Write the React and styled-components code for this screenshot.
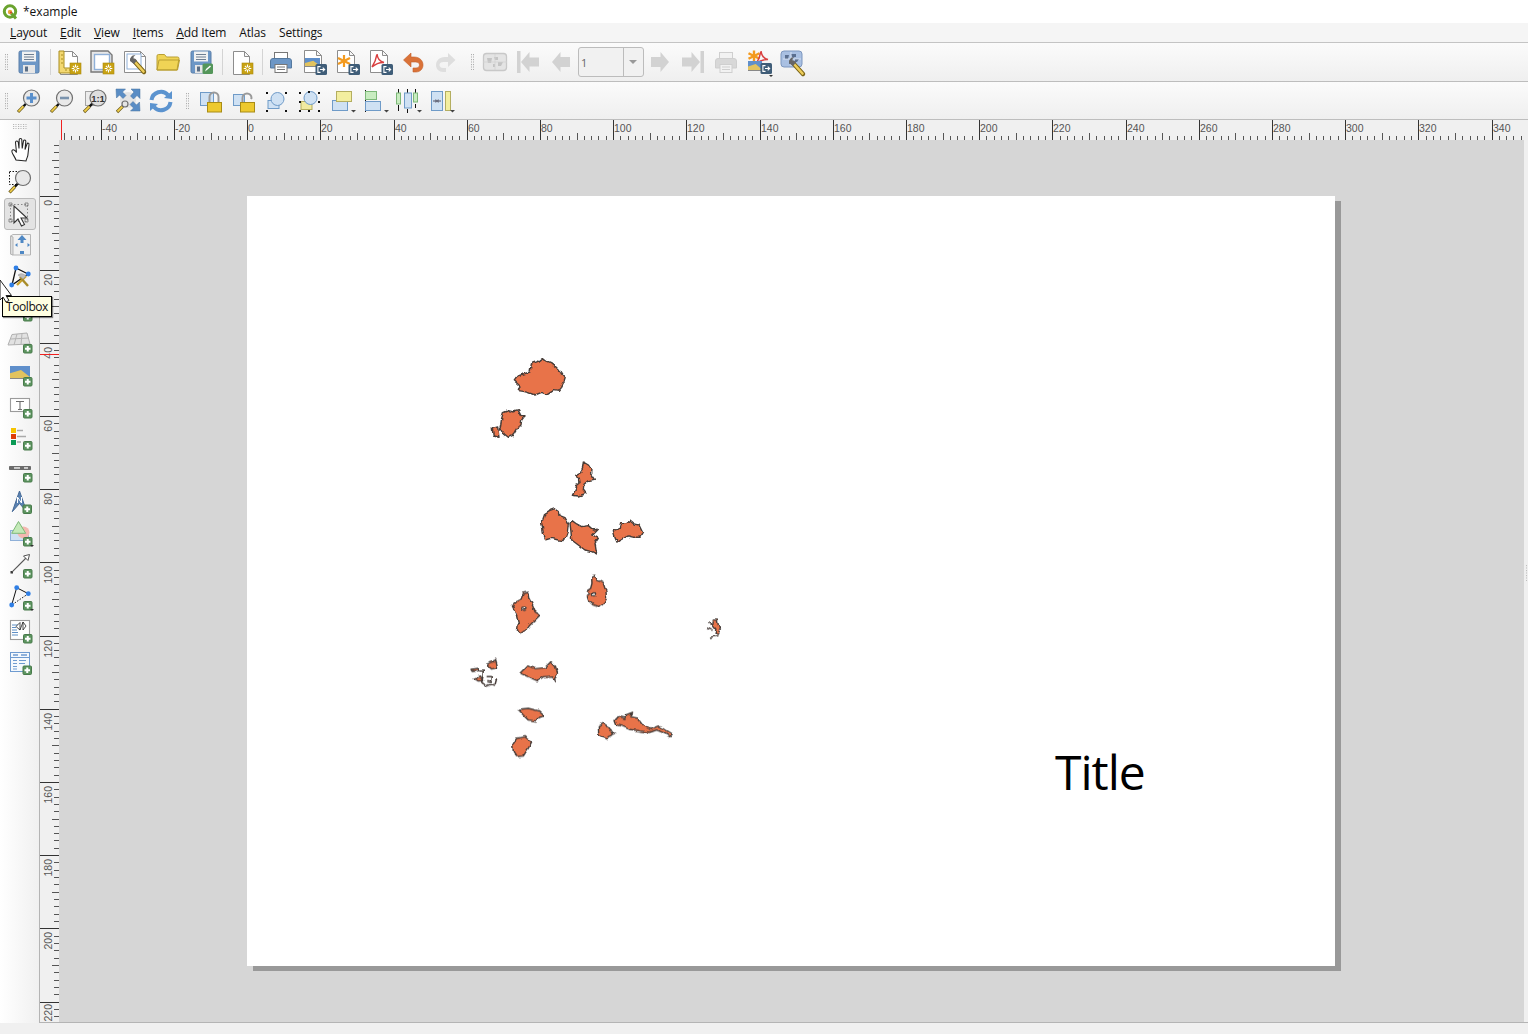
import React from 'react';
import styled, { createGlobalStyle } from 'styled-components';

const Global = createGlobalStyle`
  html, body { margin: 0; padding: 0; background: #f0f0f0; overflow: hidden; }
  body { font-family: "Open Sans", "Noto Sans", sans-serif; font-size: 12px; color: #111; }
`;

const Window = styled.div`
  position: relative; width: 1528px; height: 1034px; display: flex; flex-direction: column; overflow: hidden;
`;
const TitleBar = styled.div`
  height: 23px; flex: none; background: #fff; display: flex; align-items: center; padding-left: 2px; gap: 5px;
  font-size: 12px; color: #111;
`;
const MenuBar = styled.div`
  height: 19px; flex: none; display: flex; align-items: center; gap: 13px; padding-left: 10px;
  background: #f5f5f5; border-bottom: 1px solid #c4c4c4;
`;
const MenuItem = styled.span`
  font-size: 12px; color: #111; letter-spacing: -0.12px; u { text-underline-offset: 1px; }
`;
const ToolBar = styled.div`
  height: ${p => p.$h}px; flex: none; display: flex; align-items: center;
  background: linear-gradient(#fbfbfb, #efefef); border-bottom: 1px solid #bdbdbd;
`;
const ToolGroup = styled.div`
  display: flex; align-items: center; height: 100%; padding-right: 3.5px;
`;
const Handle = styled.div`
  width: 12.5px; height: 16px; flex: none; position: relative;
  &::before {
    content: ""; position: absolute; left: 5px; top: 0; width: 4px; height: 16px;
    background-image: radial-gradient(circle at 0.5px 0.5px, #a8a8a8 0.6px, transparent 0.8px);
    background-size: 2px 2.5px;
  }
`;
const HHandle = styled.div`
  height: 6px; width: 15px; margin: 0 auto; flex: none;
  background-image: radial-gradient(circle at 0.5px 0.5px, #b0b0b0 0.6px, transparent 0.8px);
  background-size: 2.5px 2px;
`;
const Sep = styled.div`
  width: 7px; height: 26px; flex: none; position: relative;
  &::before { content: ""; position: absolute; left: 4px; top: 0; bottom: 0; width: 1px; background: #d4d4d4; }
`;
const ToolButton = styled.div`
  width: 33px; height: 33px; flex: none; display: flex; align-items: center; justify-content: center;
`;
const IconSvg = styled.svg`
  width: 32px; height: 32px; display: block; flex: none;
`;
const LogoSvg = styled.svg`
  width: 16px; height: 16px; display: block; flex: none;
`;
const Combo = styled.div`
  width: 65.5px; height: 30px; flex: none; box-sizing: border-box; margin-left: 0.5px; display: flex;
  border: 1px solid #bcbcbc; border-radius: 3px; background: #f1f1f1; color: #666; font-size: 11px;
`;
const ComboValue = styled.div`
  width: 45px; box-sizing: border-box; padding-left: 2px; display: flex; align-items: center; border-right: 1px solid #bcbcbc;
`;
const ComboArrow = styled.div`
  flex: 1; display: flex; align-items: center; justify-content: center;
  &::before { content: ""; border: 4px solid transparent; border-top: 4px solid #999; border-bottom: 0; }
`;
const Work = styled.div`
  flex: 1; min-height: 0; display: flex;
`;
const SideBar = styled.div`
  width: 40px; flex: none; display: flex; flex-direction: column; align-items: center; padding: 4px 0 0 1px; box-sizing: border-box;
  background: linear-gradient(90deg, #ffffff, #f0f0f0); border-right: 1px solid #b4b4b4;
`;
const SideButton = styled.div`
  width: 32px; height: 32.125px; flex: none; display: flex; align-items: center; justify-content: center; box-sizing: border-box;
  ${p => p.$active && `
    background: #e3e3e3; border: 1px solid #b9b9b9; border-radius: 3px; margin-top: 1px; margin-bottom: -1px;
  `}
`;
const SideHandle = styled.div`
  height: 6px; flex: none; margin-bottom: 2.6px; display: flex; align-items: center;
`;
const Main = styled.div`
  flex: 1; min-width: 0; display: flex; flex-direction: column;
`;
const Ruler = styled.svg`
  display: block; flex: none; background: #f0f0f0;
  text { font-family: "Liberation Sans", sans-serif; font-size: 10.5px; fill: #555; }
`;
const ViewRow = styled.div`
  flex: 1; min-height: 0; display: flex; border-bottom: 1px solid #b4b4b4;
`;
const Canvas = styled.div`
  flex: 1; min-width: 0; background: #d6d6d6; padding: 56px 0 0 188px; box-sizing: border-box; overflow: hidden;
`;
const Page = styled.div`
  position: relative; width: 1088px; height: 770px; background: #fff; box-shadow: 6px 5px 0 #999;
`;
const MapSvg = styled.svg`
  position: absolute; inset: 0; width: 100%; height: 100%;
`;
const PageTitle = styled.div`
  position: absolute; left: 808px; top: 543px; font-family: "Open Sans", sans-serif; font-size: 48px; line-height: 66px; letter-spacing: -1px; color: #000;
`;
const RightStrip = styled.div`
  width: 4px; flex: none; background: #f0f0f0; position: relative;
  &::after {
    content: ""; position: absolute; left: 2px; top: 425px; width: 1px; height: 16px;
    background-image: radial-gradient(circle at 0.5px 0.5px, #bbb 0.6px, transparent 0.8px); background-size: 1px 2.5px;
  }
`;
const StatusBar = styled.div`
  height: 11px; flex: none; background: #f0f0f0;
`;
const Tooltip = styled.div`
  position: absolute; left: 2px; top: 296px; width: 50px; height: 21px; box-sizing: border-box;
  background: #ffffe1; border: 1px solid #000; box-shadow: 1px 1px 1px rgba(0,0,0,.45);
  font-size: 12px; line-height: 19px; text-align: center; color: #111; letter-spacing: -0.45px;
`;
const CursorSvg = styled.svg`
  position: absolute; left: 0; top: 280px; width: 14px; height: 22px;
`;
const IconText = styled.text`
  font-family: "Liberation Sans", sans-serif; font-weight: 700; font-size: 9.5px; fill: #333;
`;

/* ---------- icon atoms ---------- */
const Sun = ({ x = 17, y = 17 }) => (
  <g transform={`translate(${x} ${y})`}>
    <rect width="11" height="11" fill="#c8a212" stroke="#ab8a10" strokeWidth=".6" />
    <path d="M5.5 1.5v8M1.7 5.5h7.6M2.9 2.9l5.2 5.2M8.1 2.9l-5.2 5.2" stroke="#fff" strokeWidth="1.1" />
    <circle cx="5.5" cy="5.5" r="1.3" fill="#c8a212" />
  </g>
);
const Exp = ({ x = 17, y = 17 }) => (
  <g transform={`translate(${x} ${y})`}>
    <rect width="11.5" height="11" rx="1.5" fill="#3f5d78" />
    <path d="M5 2.6H2.4v5.8H5M4.5 5.5h4.5M7.2 3.6l2 1.9-2 1.9" fill="none" stroke="#fff" strokeWidth="1.1" />
  </g>
);
const Plus = ({ x = 19, y = 19, d }) => (
  <g transform={`translate(${x} ${y})`}>
    <rect x=".5" y=".5" width="8.5" height="8.5" rx="1" fill="#5d9560" stroke="#487a4b" />
    <path d="M4.75 2v5.5M2 4.75h5.5" stroke="#fff" strokeWidth="2" />
    {d && <path d="M7 8h4l-2 2z" fill="#333" />}
  </g>
);
const Drop = () => <path d="M25 25h5l-2.5 2.6z" fill="#444" />;
const Doc = ({ x = 7, y = 5, w = 17, h = 23 }) => (
  <path d={`M${x + .5} ${y + .5}h${w - 5}l5 5v${h - 5}h-${w}z M${x + w - 4.5} ${y + .5}v5h5`} fill="#fff" stroke="#8d8d8d" strokeWidth="1" />
);
const Mag = ({ cx = 18.5, cy = 13, r = 8, tx = 5, ty = 27, fill = '#e9e9e9' }) => {
  const dx = cx - tx, dy = cy - ty, L = Math.hypot(dx, dy);
  const ex = cx - (dx / L) * r, ey = cy - (dy / L) * r;
  const mx = tx + (dx / L) * 8, my = ty + (dy / L) * 8;
  return (
    <g>
      <line x1={tx} y1={ty} x2={mx} y2={my} stroke="#6b5a1a" strokeWidth="3.2" />
      <line x1={tx + .5} y1={ty - .5} x2={mx} y2={my} stroke="#f2cf4a" strokeWidth="1.8" />
      <line x1={mx} y1={my} x2={ex} y2={ey} stroke="#111" strokeWidth="2.4" />
      <circle cx={cx} cy={cy} r={r} fill={fill} stroke="#6f6f6f" strokeWidth="1.2" />
    </g>
  );
};
const Wrench = ({ x = 0, y = 0 }) => (
  <g transform={`translate(${x} ${y})`}>
    <path d="M14 13l10 11" stroke="#7a6416" strokeWidth="4.4" strokeLinecap="round" />
    <path d="M14.5 13.5l9 10" stroke="#eecd5a" strokeWidth="2.6" strokeLinecap="round" />
    <path d="M15.5 7.5a4.6 4.6 0 0 0-5.5 5.5l4 3 3-3.5-1.8-1.7-1.7-.2.2-2z" fill="#666" />
  </g>
);
const Floppy = ({ c = '#6d97c6' }) => (
  <g>
    <path d="M6 6.5q0-1.5 1.5-1.5h17q1.5 0 1.5 1.5v19q0 1.5-1.5 1.5h-17q-1.500 0-1.500-1.500z" fill={c} stroke="#5a7ea8" />
    <rect x="9" y="5.500" width="14" height="10" fill="#f2f2f2" />
    <path d="M11 8.500h10M11 11h10M11 13.500h10" stroke="#6f7f92" />
    <rect x="10" y="19" width="12" height="8" fill="#e6e6e6" />
    <rect x="12" y="20.500" width="3" height="5" fill="#5a6e86" />
  </g>
);
const Printer = ({ c = '#6d97c6', s = '#55799f', p = '#fff', l = '#777' }) => (
  <g>
    <rect x="9.500" y="6.500" width="13" height="7" fill={p} stroke={l} />
    <path d="M5.500 15q0-2.500 2.500-2.500h16q2.500 0 2.500 2.500v7h-21z" fill={c} stroke={s} />
    <rect x="10" y="18.500" width="12" height="8" fill={p} stroke={l} />
    <path d="M12 21h8M12 23.500h8" stroke={l} />
  </g>
);
const Landscape = ({ x, y, w, h }) => (
  <g>
    <rect x={x} y={y} width={w} height={h} fill="#5f8fcb" />
    <path d={`M${x} ${y + h * 0.55}L${x + w * 0.55} ${y + h * 0.3}L${x + w} ${y + h * 0.85}V${y + h}H${x}z`} fill="#e2c35f" />
    <rect x={x} y={y + h - 1} width={w} height="1" fill="#888" />
  </g>
);
const Aster = ({ x, y, r = 6, c = '#f39a1f', w = 2.2 }) => (
  <g stroke={c} strokeWidth={w}>
    <line x1={x} y1={y - r} x2={x} y2={y + r} />
    <line x1={x - r} y1={y - r * .5} x2={x + r} y2={y + r * .5} />
    <line x1={x - r} y1={y + r * .5} x2={x + r} y2={y - r * .5} />
  </g>
);
const Pdf = ({ x = 0, y = 0, c = '#d94040' }) => (
  <path transform={`translate(${x} ${y})`} d="M9 22c2-3 4-7 5-13 .5 5 2.500 7.500 7 8.500-4-.2-8 1-12 4.500z" fill="none" stroke={c} strokeWidth="1.500" />
);
const Padlock = ({ open }) => (
  <g>
    <path d={open ? 'M15.500 17v-4a4.500 4.500 0 0 1 9 0l-.5 1' : 'M15.500 18v-6a4.500 4.500 0 0 1 9 0v6'} fill="none" stroke="#9a9a9a" strokeWidth="2" />
    <rect x="13.500" y="17.500" width="14" height="9.500" fill="#edc92f" stroke="#a88c16" />
  </g>
);
const Node = ({ x, y }) => <circle cx={x} cy={y} r="2.400" fill="#2f7fe6" />;

/* ---------- icons ---------- */
const icons = {
  save: <Floppy />,
  newLayout: <g><Doc /><path d="M6 5h5v17h12v5H6z" fill="#f3d872" stroke="#a98d20" /><path d="M8 9h2M8 13h2M8 17h2M13 25v-2M17 25v-2" stroke="#a98d20" /><Sun /></g>,
  dupLayout: <g><path d="M5 5h17l4 4v17H5z" fill="#e7e7e7" stroke="#777" strokeWidth="1.400" /><rect x="8.500" y="8.500" width="15" height="15" fill="#fff" stroke="#8fb0d8" strokeWidth="1.400" /><Sun /></g>,
  layoutProps: <g><Doc x={5} y={5} w={21} h={21} /><rect x="8" y="8" width="14" height="15" fill="#fff" stroke="#8fb0d8" /><Wrench x={1} y={2} /></g>,
  folder: <path d="M5 24V10q0-1.500 1.500-1.500h6l2 2.500h11q1.500 0 1.500 1.500l-2 11.500z M7 14h20.500L25.500 24H5z" fill="#f0d455" stroke="#b99f33" strokeWidth="1" />,
  saveAs: <g><Floppy /><rect x="17.500" y="17.500" width="10.500" height="10.500" rx="1.500" fill="#54965a" /><path d="M20 25.500l1-2.500 4-3.500 1 1-4 3.500z" fill="#fff" /></g>,
  newPage: <g><Doc x={8} y={5} w={16} h={23} /><Sun /></g>,
  print: <Printer />,
  expImg: <g><Doc x={6} y={4} w={17} h={22} /><Landscape x={7} y={12} w={15} h={9} /><Exp x={17.500} y={18} /></g>,
  expSvg: <g><Doc x={6} y={4} w={17} h={22} /><Aster x={13} y={15} /><Exp x={17.500} y={18} /></g>,
  expPdf: <g><Doc x={6} y={4} w={17} h={22} /><Pdf x={-1} y={-1} /><Exp x={17.500} y={18} /></g>,
  undo: <path d="M6.500 14l7.500-7v4h3c6 0 9 4 9 8 0 4-3 7-7 7h-3v-4h3c2 0 3.500-1.300 3.500-3 0-1.800-1.500-3-4-3H14v5z" fill="#da7238" stroke="#c25f2a" strokeWidth=".6" />,
  redo: <path d="M25.500 14L18 7v4h-3c-6 0-9 4-9 8 0 4 3 7 7 7h3v-4h-3c-2 0-3.500-1.300-3.500-3 0-1.800 1.500-3 4-3H18v5z" fill="#dedede" />,
  atlasPreview: <g><rect x="4.500" y="7.500" width="23" height="17" rx="3" fill="#e4e4e4" stroke="#c8c8c8" strokeWidth="1.300" /><path d="M8 12h5l-1 5h-3zM15 11h4v3h-3zM19 16h5l-2 4h-3zM14 18h2v3h-2z" fill="#c4c4c4" /><path d="M4 16h24M16 8v16" stroke="#d2d2d2" strokeWidth=".8" /></g>,
  first: <g fill="#d2d2d2"><rect x="5" y="5" width="3.500" height="22" /><path d="M9 16l8.500-10v5.500H27v9h-9.500V26z" /></g>,
  prev: <path d="M7 16l8.500-10v5h9.500v10h-9.500v5z" fill="#d2d2d2" />,
  next: <path d="M25 16l-8.500-10v5H7v10h9.500v5z" fill="#d2d2d2" />,
  last: <g fill="#d2d2d2"><rect x="23.500" y="5" width="3.500" height="22" /><path d="M23 16L14.500 6v5.500H5v9h9.500V26z" /></g>,
  printAtlas: <Printer c="#d8d8d8" s="#cfcfcf" p="#f2f2f2" l="#cfcfcf" />,
  expAtlas: <g><Aster x={11} y={10} r={5.500} w={2.400} /><Pdf x={4} y={-4} /><Landscape x={5} y={15} w={14} h={10} /><Exp x={17.500} y={17} /><path d="M26 29h4l-2 2z" fill="#333" /></g>,
  atlasSettings: <g><rect x="5" y="5" width="21" height="16" rx="3" fill="#a9c0e2" stroke="#7d97bf" /><path d="M9 9h4l-1 4H9zM15 8h5v3h-4zM19 13h4l-2 3h-2zM13 15h2v3h-2z" fill="#5a6f90" /><path d="M7 13h18M15 6v14" stroke="#e8eef8" strokeWidth=".7" /><Wrench x={3} y={4} /></g>,

  zoomIn: <g><Mag /><path d="M18.500 8v10M13.500 13h10" stroke="#5a90cc" strokeWidth="3" /></g>,
  zoomOut: <g><Mag /><path d="M14 13h9" stroke="#7a93ad" strokeWidth="2.600" /></g>,
  zoom100: <g><rect x="6.500" y="6.500" width="14" height="14" fill="#ececec" stroke="#a5a5a5" /><Mag cx={19} cy={13} r={8} fill="#dedede" /><IconText x="19" y="16.500" textAnchor="middle">1:1</IconText></g>,
  zoomFull: <g><circle cx="16" cy="15" r="8" fill="#e4e4e4" /><g fill="#5a8dc5" stroke="#44719f" strokeWidth=".5"><path d="M4 4h9.500l-3 3 3.500 3.500-3 3L7.500 10l-3 3zM28 4v9.500l-3-3-3.500 3.500-3-3L22 7l-3-3zM28 26h-9.500l3-3-3.500-3.500 3-3 3.500 3.500 3-3z" /></g><Mag cx={13} cy={19} r={3} tx={5} ty={27} fill="#e4e4e4" /></g>,
  refresh: <g fill="none" stroke="#5b93cf" strokeWidth="4"><path d="M6.500 15a9.500 9.500 0 0 1 16.500-5" /><path d="M25.500 17a9.500 9.500 0 0 1-16.500 5" /><path d="M19 13l8 1V6z" fill="#5b93cf" stroke="none" /><path d="M13 19l-8-1v8z" fill="#5b93cf" stroke="none" /></g>,

  lock: <g><rect x="6.500" y="7.500" width="13" height="13" fill="#cfe1f3" stroke="#6f9bc8" /><Padlock /></g>,
  unlock: <g><rect x="6.500" y="9.500" width="11" height="11" fill="#cfe1f3" stroke="#6f9bc8" /><Padlock open /></g>,
  group: <g><rect x="8" y="15.500" width="11" height="8" fill="#cfe1f3" stroke="#6f9bc8" /><circle cx="17.500" cy="14" r="6.500" fill="#cfe1f3" stroke="#6f9bc8" /><path d="M6 7h2v2H6zM25 7h2v2h-2zM6 25h2v2H6zM25 25h2v2h-2z" fill="#111" /></g>,
  ungroup: <g><rect x="8" y="16.500" width="11" height="8" fill="#f0eaa0" stroke="#b4ae60" /><circle cx="17.500" cy="13" r="6.500" fill="#cfe1f3" stroke="#6f9bc8" /><path d="M6 7h2v2H6zM15 6h2v2h-2zM25 7h2v2h-2zM6 16h2v2H6zM25 16h2v2h-2zM6 25h2v2H6zM15 25h2v2h-2zM25 25h2v2h-2z" fill="#111" /></g>,
  raise: <g><rect x="6.500" y="15.500" width="15" height="10" fill="#cfe1f3" stroke="#6f9bc8" /><rect x="10.500" y="6.500" width="15" height="10" fill="#f3ee9f" stroke="#b4ae60" /><Drop /></g>,
  align: <g><path d="M6.500 5v22" stroke="#111" /><rect x="6.500" y="6.500" width="11" height="8" fill="#c8ecc0" stroke="#7cb878" /><rect x="6.500" y="16.500" width="15" height="9" fill="#cfe1f3" stroke="#6f9bc8" /><Drop /></g>,
  distribute: <g><path d="M6.500 4v4M6.500 20v6M15.500 4v4M15.500 24v4M23.500 4v4M23.500 19v4" stroke="#111" /><rect x="4.500" y="8" width="4" height="11" fill="#c8ecc0" stroke="#7cb878" /><rect x="12.500" y="8" width="7" height="15" fill="#cfe1f3" stroke="#6f9bc8" /><rect x="21.500" y="8" width="4" height="9" fill="#c8ecc0" stroke="#7cb878" /><Drop /></g>,
  resize: <g><rect x="6.500" y="6.500" width="11" height="19" fill="#cfe1f3" stroke="#6f9bc8" /><rect x="20.500" y="6.500" width="5" height="19" fill="#f3ee9f" stroke="#b4ae60" /><path d="M8 16h3M16 16h-3" stroke="#556" /><path d="M10.500 14v4l2-2zM13.500 14v4l-2-2z" fill="#556" /><Drop /></g>,

  hand: <path d="M12 27C10.500 23 7 19.500 8 17.500 9 16 11 17 12.500 19.500L11.500 9.500C11.500 7.500 14 7.500 14.300 9.500L15 15.500 15.200 6.800C15.200 5 17.800 5 17.800 6.800L18.200 15.500 19.500 8C20 6.300 22 6.700 21.800 8.500L21 16.500 23 11C23.600 9.500 25.500 10 25 11.800L24 21C24 24 22.500 25 22 28z" fill="#fff" stroke="#222" strokeWidth="1.050" />,
  zoomArea: <g><rect x="5.500" y="6.500" width="15" height="13" fill="none" stroke="#111" strokeDasharray="1.500 1.500" /><Mag cx={19} cy={13} r={7.500} tx={5.500} ty={27.500} fill="#e8e8e8" /></g>,
  select: <g><rect x="6.500" y="6.500" width="17" height="17" fill="none" stroke="#888" strokeDasharray="1.500 2" /><path d="M5 5h3v3H5zM21 5h3v3h-3zM5 21h3v3H5zM21 21h3v3h-3z" fill="none" stroke="#777" strokeWidth=".8" /><path d="M10 8v17l4-4 3.500 7 3-1.500-3.500-6.500h6z" fill="#fff" stroke="#333" strokeWidth="1.100" /></g>,
  moveContent: <g><path d="M9 5.500h17.500V26H9l-2.500-1V7z" fill="#f2f2f2" stroke="#b5b5b5" /><path d="M6.500 7v18l2.500 1V8z" fill="#ddd" stroke="#b5b5b5" /><path transform="translate(2 -1)" d="M16 7l4.500 5h-3v3h-3v-3h-3zM9 17l2.500-2v4zM24 17l-2.500-2v4zM14 23h4v3h-4z" fill="#4f88c4" /></g>,
  editNodes: <g><path d="M12 7L24 13 8 24z" fill="none" stroke="#111" strokeWidth="1.300" /><Node x={12} y={7} /><Node x={24.300} y={13} /><Node x={7.700} y={24} /><path d="M22 15l-9 9" stroke="#c9a12a" strokeWidth="2.400" /><path d="M16 16l8 9" stroke="#a88c2a" strokeWidth="2.400" /><path d="M14 14q4-3 8 1l-3 3z" fill="#bdbdbd" stroke="#999" strokeWidth=".6" /></g>,
  addMap: <g><path d="M6 6h20v14H6z" fill="#eef3e8" stroke="#9a9a9a" /><Plus /></g>,
  map3d: <g><path d="M8 9.500L23 8l3 11-22 1z" fill="#e2e2e2" stroke="#b0b0b0" /><path d="M13 9l-3 11M18 8.500l-1 11M6.500 14L25 13" stroke="#b5b5b5" /><Plus /></g>,
  picture: <g><Landscape x={6} y={8} w={20} h={13} /><Plus /></g>,
  label: <g><rect x="6.500" y="8.500" width="19" height="13" fill="#fff" stroke="#9b9b9b" strokeWidth="1.100" /><path d="M12 11.500h8M16 11.500v8M14 19.500h4" stroke="#6d6d6d" strokeWidth="1.100" /><Plus /></g>,
  legend: <g><rect x="7" y="6" width="5" height="5" fill="#f6c400" /><rect x="7" y="12" width="5" height="5" fill="#dd3d08" /><rect x="7" y="18" width="5" height="5" fill="#0a9a55" /><path d="M13 8.500h6M13 14.500h9M13 20h4" stroke="#aaa" strokeWidth="1.300" /><Plus /></g>,
  scalebar: <g><rect x="5" y="12" width="22" height="4" rx=".8" fill="#6b6b6b" /><rect x="10" y="13.200" width="6" height="1.500" fill="#e8e8e8" /><rect x="20" y="13.200" width="4" height="1.500" fill="#e8e8e8" /><Plus /></g>,
  north: <g><path d="M15.500 5L8.300 25.700 15.500 17.500 22.700 25.700z" fill="#5a82b2" stroke="#466a96" /><path d="M13.500 17v-6l4 6v-6" fill="none" stroke="#fff" strokeWidth="1" /><Plus x={18.500} y={18.500} /></g>,
  shape: <g><rect x="6.500" y="12.500" width="18" height="10" fill="#cfe1f3" stroke="#8fb0d8" /><circle cx="19.500" cy="14.500" r="6" fill="#f4b8b0" /><path d="M14.500 3.500L7.700 15.300h14z" fill="#c4eab8" stroke="#7eb878" /><Plus d /></g>,
  arrow: <g><rect x="6.500" y="21" width="2.500" height="2.500" fill="#333" /><path d="M7.700 22.300L24 6" stroke="#555" strokeWidth="1.100" /><path d="M25.500 4.500l-1.500 6-4.500-4.500z" fill="#fff" stroke="#555" /><Plus /></g>,
  polyline: <g><path d="M7.700 23L12.700 5.700 24.300 11.700" fill="none" stroke="#111" /><path d="M24.300 11.700L7.700 23" fill="none" stroke="#111" strokeDasharray="1.500 1.500" /><Node x={7.700} y={23} /><Node x={12.700} y={5.700} /><Node x={24.300} y={11.700} /><Plus d /></g>,
  html: <g><rect x="6.500" y="5.500" width="19" height="19" fill="#fff" stroke="#9b9b9b" strokeWidth="1.100" /><path d="M8 10h6M8 12.500h4M8 15h5M8 17.500h6M8 20h6" stroke="#5f8fc6" strokeWidth="1.200" /><path d="M16 7.500l-4 4 4 3.500zM19 7l3 4-3 4zM16 15l3-8" fill="#fff" stroke="#222" strokeWidth=".8" /><Plus /></g>,
  table: <g><rect x="6.500" y="5.500" width="19" height="19" fill="#f5f9fd" stroke="#6f9bd0" /><path d="M6.500 10.500h19" stroke="#6f9bd0" /><path d="M9 8h5M17 8h6" stroke="#6f9bd0" strokeWidth="1.400" /><path d="M9 13.500h4M15 13.500h7M9 16.500h4M15 16.500h6M9 19.500h4M9 22h4" stroke="#6f9bd0" /><Plus x={18.500} y={18.500} /></g>,
};

const Icon = ({ name }) => <IconSvg viewBox="0 0 32 32">{icons[name]}</IconSvg>;
const Tools = ({ names }) => names.map(n => <ToolButton key={n}><Icon name={n} /></ToolButton>);

/* ---------- rulers ---------- */
const SCALE = 3.66;
const X0 = 247.1;
const Y0 = 196.3;

const TopRuler = () => {
  const ticks = [], labels = [];
  for (let v = -50; v <= 350; v += 2) {
    const x = Math.round(X0 + v * SCALE) + 0.5;
    if (x < 59 || x > 1528) continue;
    const major = v % 20 === 0, mid = v % 10 === 0;
    ticks.push(<line key={v} x1={x} x2={x} y1={major ? 120 : mid ? 133 : 136} y2={140} stroke={major ? '#333' : '#555'} />);
    if (major) labels.push(<text key={v} x={x + 0.5} y={132}>{v}</text>);
  }
  return (
    <Ruler width="1488" height="20" viewBox="40 120 1488 20">
      {ticks}{labels}
      <line x1="61.5" x2="61.5" y1="120" y2="140" stroke="#f02020" />
    </Ruler>
  );
};
const LeftRuler = () => {
  const ticks = [], labels = [];
  for (let v = -14; v <= 226; v += 2) {
    const y = Math.round(Y0 + v * SCALE) + 0.5;
    if (y < 140 || y > 1022) continue;
    const major = v % 20 === 0, mid = v % 10 === 0;
    ticks.push(<line key={v} y1={y} y2={y} x1={major ? 40 : mid ? 52 : 54} x2={59} stroke={major ? '#333' : '#555'} />);
    if (major && v < 220) labels.push(
      <text key={v} textAnchor="end" transform={`translate(51.5 ${y + 3.5}) rotate(-90)`}>{v}</text>
    );
  }
  return (
    <Ruler width="19" height="882" viewBox="40 140 19 882">
      {ticks}{labels}
      <text textAnchor="start" transform="translate(51.5 1021.5) rotate(-90)">220</text>
      <line y1="354.5" y2="354.5" x1="40" x2="59" stroke="#f02020" />
    </Ruler>
  );
};

/* ---------- map ---------- */
const shapesA = [
  '163,92 175,78 190,72 210,66 214,42 232,35 247,23 258,32 272,38 287,50 297,60 305,72 316,84 312,97 305,112 295,124 280,122 262,134 245,127 225,135 205,128 190,124 175,122 180,108',
  '122,225 125,205 130,188 145,182 160,186 175,182 183,197 195,197 185,210 183,225 170,238 160,255 145,262 133,252 125,238 118,240',
  '97,235 113,231 117,262 100,258',
  '370,336 385,345 393,358 392,372 403,388 385,392 372,403 370,420 378,430 355,438 337,436 345,422 350,408 347,403 360,398 358,385 347,376 362,368 368,352',
  '245,518 255,490 268,482 285,476 298,485 300,497 315,503 325,520 322,545 312,572 295,570 275,565 258,570 250,550',
  '330,520 336,512 350,522 365,530 385,527 400,540 415,538 405,548 398,555 415,565 405,580 410,612 395,605 375,600 355,585 335,570 333,545',
  '460,542 478,535 482,518 500,518 510,510 525,522 537,525 548,548 540,562 522,562 505,558 490,565 472,575 465,560',
];
const shapesB = [
  '395,18 405,16 412,30 430,40 438,65 440,85 432,100 415,110 400,105 385,90 382,80 392,70 382,62 392,55 396,40',
  '157,108 170,95 183,88 190,70 204,67 207,85 215,100 225,125 240,135 225,150 210,165 200,178 180,192 172,180 175,160 168,130',
  '80,283 100,275 107,265 110,280 113,293 95,297',
  '42,325 62,318 68,332 55,333',
  '36,298 55,295 56,302 40,304',
  '183,310 205,287 225,296 255,293 273,275 287,290 293,312 284,322 286,338 275,318 250,320 232,332 205,320',
  '175,418 205,415 235,422 253,438 235,442 228,453 205,450 190,435',
  '158,525 170,505 195,500 215,515 205,535 190,558 170,560 160,545',
  '415,470 430,460 445,470 460,490 467,490 445,500 440,508 422,498 416,490',
  '465,452 475,440 495,445 497,435 518,427 512,440 535,445 550,465 570,478 595,468 615,478 637,492 630,500 610,488 590,480 570,487 540,483 510,478 490,470 470,465',
  '760,150 772,150 775,165 782,175 775,190 765,188 768,178 758,165',
];
const MapDrawing = () => (
  <MapSvg viewBox="247 196 1088 770">
    <defs>
      <filter id="rough" x="-5%" y="-5%" width="110%" height="110%">
        <feTurbulence type="fractalNoise" baseFrequency="0.16" numOctaves="2" seed="4" result="n" />
        <feDisplacementMap in="SourceGraphic" in2="n" scale="4" xChannelSelector="R" yChannelSelector="G" />
      </filter>
    </defs>
    <g filter="url(#rough)" fill="#e8734a" stroke="#463c38" strokeLinejoin="round">
      <g transform="translate(460 350) scale(.3333)" strokeWidth="4.200">
        {shapesA.map((p, i) => <polygon key={i} points={p} />)}
      </g>
      <g transform="translate(460 570) scale(.3333)" strokeWidth="4.200">
        {shapesB.map((p, i) => <polygon key={i} points={p} />)}
        <circle cx="402" cy="73" r="5" fill="#fff" />
        <circle cx="193" cy="116" r="5" fill="#fff" />
        <path d="M58 303h12l-2 20-3 14 15 11 12-6 13 3 5-20M80 320h14l-2 14-10-2M745 155l15 12M738 174l20 6M750 202l26-6" fill="none" strokeWidth="4.500" />
      </g>
    </g>
  </MapSvg>
);

const QgisLogo = () => (
  <LogoSvg viewBox="0 0 16 16">
    <circle cx="8" cy="7.500" r="5.700" fill="none" stroke="#6aa32f" strokeWidth="3" />
    <path d="M9 9l5 5.500" stroke="#6aa32f" strokeWidth="3" />
    <circle cx="8" cy="8" r="2.200" fill="#e8a33a" />
    <circle cx="9" cy="8.500" r="1" fill="#c8402a" />
  </LogoSvg>
);

const menu = [['L', 'ayout'], ['E', 'dit'], ['V', 'iew'], ['I', 'tems'], ['A', 'dd Item'], ['', 'Atlas'], ['', 'Settings']];
const side = ['hand', 'zoomArea', 'select', 'moveContent', 'editNodes', 'addMap', 'map3d', 'picture', 'label', 'legend', 'scalebar', 'north', 'shape', 'arrow', 'polyline', 'html', 'table'];

export default function App() {
  return (
    <Window>
      <Global />
      <TitleBar><QgisLogo />*example</TitleBar>
      <MenuBar>
        {menu.map(([u, r]) => <MenuItem key={r}>{u && <u>{u}</u>}{r}</MenuItem>)}
      </MenuBar>
      <ToolBar $h={38}>
        <ToolGroup>
          <Handle />
          <Tools names={['save']} /><Sep />
          <Tools names={['newLayout', 'dupLayout', 'layoutProps', 'folder', 'saveAs']} /><Sep />
          <Tools names={['newPage']} /><Sep />
          <Tools names={['print', 'expImg', 'expSvg', 'expPdf', 'undo', 'redo']} />
        </ToolGroup>
        <ToolGroup>
          <Handle />
          <Tools names={['atlasPreview', 'first', 'prev']} />
          <Combo><ComboValue>1</ComboValue><ComboArrow /></Combo>
          <Tools names={['next', 'last', 'printAtlas', 'expAtlas', 'atlasSettings']} />
        </ToolGroup>
      </ToolBar>
      <ToolBar $h={37}>
        <ToolGroup>
          <Handle />
          <Tools names={['zoomIn', 'zoomOut', 'zoom100', 'zoomFull', 'refresh']} />
        </ToolGroup>
        <ToolGroup>
          <Handle />
          <Tools names={['lock', 'unlock', 'group', 'ungroup', 'raise', 'align', 'distribute', 'resize']} />
        </ToolGroup>
      </ToolBar>
      <Work>
        <SideBar>
          <SideHandle><HHandle /></SideHandle>
          {side.map(n => <SideButton key={n} $active={n === 'select'}><Icon name={n} /></SideButton>)}
        </SideBar>
        <Main>
          <TopRuler />
          <ViewRow>
            <LeftRuler />
            <Canvas>
              <Page>
                <MapDrawing />
                <PageTitle>Title</PageTitle>
              </Page>
            </Canvas>
            <RightStrip />
          </ViewRow>
        </Main>
      </Work>
      <StatusBar />
      <Tooltip>Toolbox</Tooltip>
      <CursorSvg viewBox="0 0 14 22">
        <path d="M0 0v20l3-3 3 5 3-1.500-3-5h5.500z" fill="#fff" stroke="#222" strokeWidth="1" />
      </CursorSvg>
    </Window>
  );
}
